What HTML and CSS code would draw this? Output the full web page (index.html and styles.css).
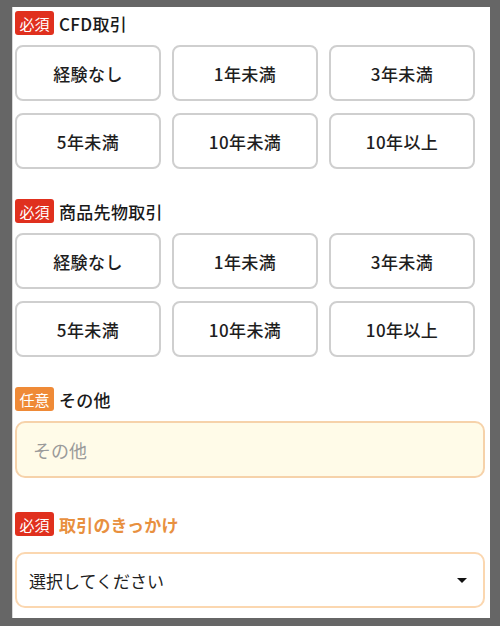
FILE: index.html
```html
<!DOCTYPE html>
<html lang="ja">
<head>
<meta charset="utf-8">
<link rel="stylesheet" href="styles.css">
</head>
<body>
<div class="panel">
  <section class="field">
    <div class="label"><span class="badge req">必須</span><span class="label-text">CFD取引</span></div>
    <div class="choices">
      <button class="choice">経験なし</button>
      <button class="choice">1年未満</button>
      <button class="choice">3年未満</button>
      <button class="choice">5年未満</button>
      <button class="choice">10年未満</button>
      <button class="choice">10年以上</button>
    </div>
  </section>
  <section class="field">
    <div class="label"><span class="badge req">必須</span><span class="label-text">商品先物取引</span></div>
    <div class="choices">
      <button class="choice">経験なし</button>
      <button class="choice">1年未満</button>
      <button class="choice">3年未満</button>
      <button class="choice">5年未満</button>
      <button class="choice">10年未満</button>
      <button class="choice">10年以上</button>
    </div>
  </section>
  <section class="field other">
    <div class="label"><span class="badge opt">任意</span><span class="label-text">その他</span></div>
    <div class="text-input">その他</div>
  </section>
  <section class="field last">
    <div class="label"><span class="badge req">必須</span><span class="label-text accent">取引のきっかけ</span></div>
    <div class="select"><span>選択してください</span><span class="caret"></span></div>
  </section>
</div>
</body>
</html>
```

FILE: styles.css
```css
* { box-sizing: border-box; }
html, body { margin: 0; padding: 0; }
body {
  background: #666666;
  width: 500px;
  height: 626px;
  overflow: hidden;
  font-family: "Noto Sans CJK JP", sans-serif;
  color: #1e1e1e;
}
.panel {
  margin: 7px 10px 0 12px;
  height: 611px;
  background: #ffffff;
  border-left: 1px solid #d8d8d8;
  padding: 4px 5px 0 2px;
}
.field { margin-bottom: 30px; }
.field.other { margin-bottom: 34px; }
.field.last { margin-bottom: 0; }
.label {
  display: flex;
  align-items: center;
  height: 24px;
  margin-bottom: 10px;
}
.badge {
  display: inline-flex;
  align-items: center;
  justify-content: center;
  width: 39px;
  height: 24px;
  border-radius: 3px;
  color: #fff;
  font-family: "Noto Sans CJK JP", sans-serif;
  font-size: 15px;
  line-height: 1;
  margin-right: 5px;
}
.badge.req { background: #e0301e; }
.badge.opt { background: #ef8a37; }
.label-text {
  font-size: 17px;
  font-weight: 500;
  color: #1a1a1a;
  letter-spacing: 0.3px;
}
.label-text.accent {
  color: #e8903f;
  font-weight: 700;
}
.choices {
  display: grid;
  grid-template-columns: repeat(3, 146px);
  grid-auto-rows: 56px;
  column-gap: 11px;
  row-gap: 12px;
}
.choice {
  border: 2px solid #cfcfcf;
  border-radius: 8px;
  background: #fff;
  font-family: "Noto Sans CJK JP", sans-serif;
  font-size: 17px;
  font-weight: 500;
  color: #1e1e1e;
  letter-spacing: 0.4px;
  padding: 0;
}
.text-input {
  height: 57px;
  border: 2px solid #f6d2aa;
  border-radius: 10px;
  background: #fffbe8;
  display: flex;
  align-items: center;
  padding-left: 16px;
  font-size: 18px;
  color: #9a9a9a;
}
.field.last .label { margin-bottom: 16px; }
.select {
  height: 56px;
  border: 2px solid #fbd7b0;
  border-radius: 10px;
  background: #fff;
  display: flex;
  align-items: center;
  justify-content: space-between;
  padding: 0 16px 0 12px;
  font-size: 17px;
  color: #1e1e1e;
}
.caret {
  width: 0;
  height: 0;
  border-left: 5px solid transparent;
  border-right: 5px solid transparent;
  border-top: 5px solid #111;
}
```
